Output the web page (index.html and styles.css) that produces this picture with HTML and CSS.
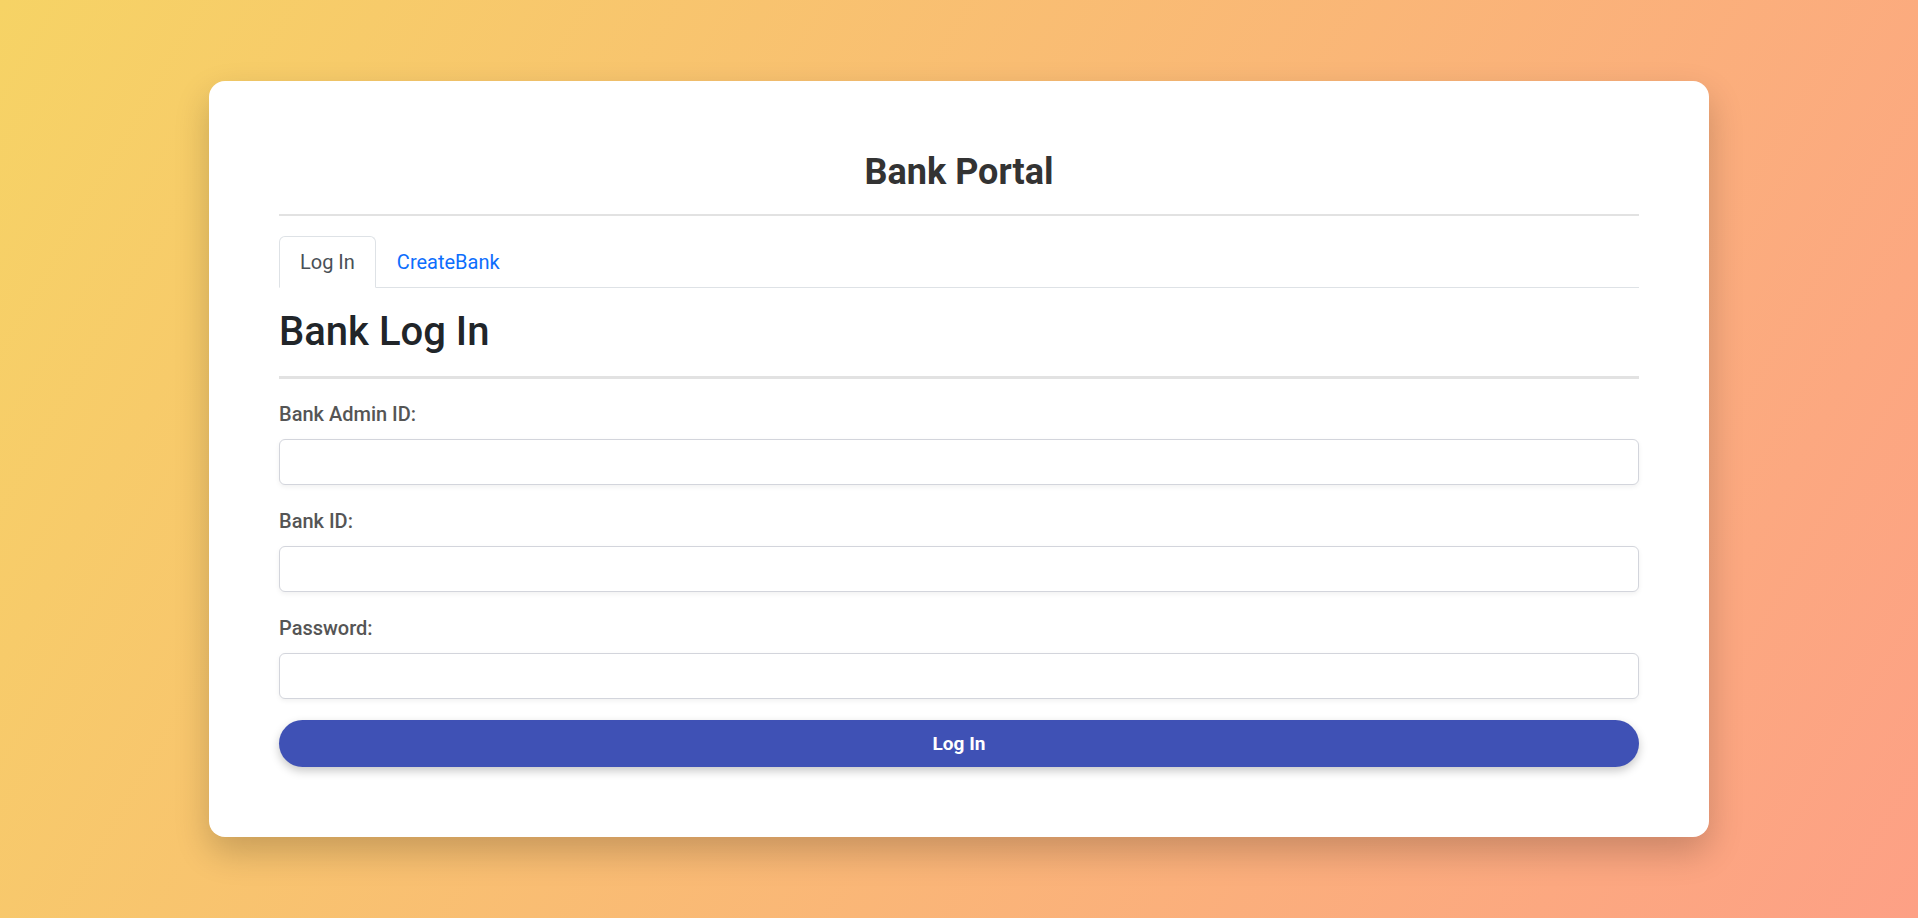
FILE: index.html
```html
<!DOCTYPE html>
<html lang="en">
<head>
<meta charset="utf-8">
<title>Bank Portal</title>
<link rel="stylesheet" href="styles.css">
</head>
<body>
<main class="page">
  <section class="card">
    <header class="portal-header">
      <h2 class="portal-title">Bank Portal</h2>
    </header>
    <nav class="tabs">
      <a class="tab tab-active" href="#">Log In</a>
      <a class="tab" href="#">CreateBank</a>
    </nav>
    <h1 class="form-title">Bank Log In</h1>
    <form class="form">
      <label class="field-label" for="admin">Bank Admin ID:</label>
      <input class="field-input" id="admin" type="text">
      <label class="field-label" for="bank">Bank ID:</label>
      <input class="field-input" id="bank" type="text">
      <label class="field-label" for="pwd">Password:</label>
      <input class="field-input" id="pwd" type="password">
      <button class="submit" type="button">Log In</button>
    </form>
  </section>
</main>
</body>
</html>
```
FILE: styles.css
```css
* { box-sizing: border-box; }
html, body { margin: 0; padding: 0; height: 100%; }
body {
  font-family: Roboto, "Liberation Sans", sans-serif;
  background: linear-gradient(120deg, #f6d365 0%, #fda085 100%);
  min-height: 918px;
}
.page {
  padding-top: 81px;
}
.card {
  width: 1500px;
  margin: 0 auto;
  background: #fff;
  border-radius: 16px;
  padding: 70px;
  box-shadow: 0 15px 35px rgba(0, 0, 0, 0.2);
}
.portal-header {
  padding-bottom: 20px;
  border-bottom: 2px solid #e2e2e2;
}
.portal-title {
  margin: 0;
  text-align: center;
  font-size: 36px;
  line-height: 1.2;
  font-weight: 700;
  color: #333;
}
.tabs {
  display: flex;
  margin-top: 20px;
  border-bottom: 1px solid #dee2e6;
}
.tab {
  display: block;
  padding: 10px 20px;
  font-size: 20px;
  line-height: 30px;
  color: #0d6efd;
  text-decoration: none;
  border: 1px solid transparent;
  border-top-left-radius: 6px;
  border-top-right-radius: 6px;
  margin-bottom: -1px;
}
.tab-active {
  color: #495057;
  background: #fff;
  border-color: #dee2e6 #dee2e6 #fff;
}
.form-title {
  margin: 20px 0 0;
  padding-bottom: 20px;
  border-bottom: 3px solid #e2e2e2;
  font-size: 40px;
  line-height: 1.2;
  font-weight: 500;
  color: #212529;
}
.form {
  display: flex;
  flex-direction: column;
  padding-top: 20px;
}
.field-label {
  font-size: 20px;
  line-height: 30px;
  font-weight: 500;
  color: #555;
  margin-bottom: 10px;
}
.field-input {
  height: 46px;
  border: 1px solid #d3d5dc;
  border-radius: 6px;
  padding: 0 12px;
  font-size: 18px;
  margin-bottom: 21px;
  box-shadow: 0 2px 5px rgba(0, 0, 0, 0.06);
  outline: none;
}
.submit {
  height: 47px;
  border: none;
  border-radius: 24px;
  background: #3f51b5;
  color: #fff;
  font-family: Roboto, "Liberation Sans", sans-serif;
  font-size: 19px;
  font-weight: 700;
  box-shadow: 0 4px 10px rgba(0, 0, 0, 0.22);
}
```
